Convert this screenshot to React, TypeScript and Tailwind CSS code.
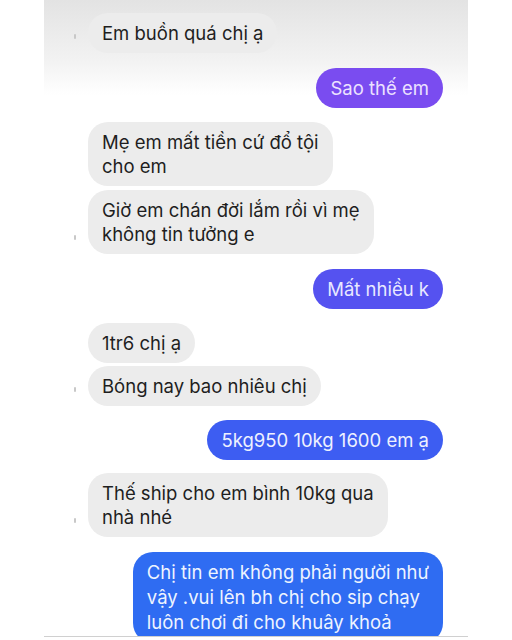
import React from "react";

const font = { fontFamily: "Inter, 'Noto Sans', sans-serif" };

function Dot() {
  return <div className="w-[2px] h-[5px] rounded-full bg-[#c8c8c8]" />;
}

function Left({
  lines,
  dot,
  className,
}: {
  lines: string[];
  dot?: boolean;
  className: string;
}) {
  return (
    <div className={"flex items-end shrink-0 " + className}>
      <div className="w-[44px] flex justify-end pr-[12px] pb-[14px]">
        {dot ? <Dot /> : null}
      </div>
      <div className="bg-[#ececec] rounded-[20px] px-[14px] py-[8px] text-[18.5px] leading-[24px] text-[#1e1e1e]">
        {lines.map((l, i) => (
          <div key={i}>{l}</div>
        ))}
      </div>
    </div>
  );
}

function Right({
  lines,
  bg,
  fg,
  className,
  lh,
}: {
  lines: string[];
  bg: string;
  fg: string;
  className: string;
  lh?: string;
}) {
  return (
    <div className={"flex justify-end shrink-0 pr-[25px] " + className}>
      <div
        className={
          "rounded-[20px] px-[14px] py-[8px] text-[18.5px] " +
          bg +
          " " +
          fg +
          " " +
          (lh ?? "leading-[24px]")
        }
      >
        {lines.map((l, i) => (
          <div key={i}>{l}</div>
        ))}
      </div>
    </div>
  );
}

export default function App() {
  return (
    <div className="w-[512px] h-[640px] bg-white flex justify-center" style={font}>
      <div className="w-[424px] h-[640px] flex flex-col">
        <div className="h-[636px] overflow-hidden flex flex-col bg-[linear-gradient(to_bottom,#e3e3e3_0px,#f2f2f2_60px,#ffffff_95px,#ffffff_100%)]">
          <Left className="mt-[13px]" lines={["Em buồn quá chị ạ"]} dot />
          <Right
            className="mt-[15px]"
            bg="bg-[#7a4cf0]"
            fg="text-[#ece2ff]"
            lines={["Sao thế em"]}
          />
          <Left className="mt-[14px]" lines={["Mẹ em mất tiền cứ đổ tội", "cho em"]} />
          <Left
            className="mt-[4px]"
            lines={["Giờ em chán đời lắm rồi vì mẹ", "không tin tưởng e"]}
            dot
          />
          <Right
            className="mt-[15px]"
            bg="bg-[#5552f0]"
            fg="text-[#e8e8ff]"
            lines={["Mất nhiều k"]}
          />
          <Left className="mt-[14px]" lines={["1tr6 chị ạ"]} />
          <Left className="mt-[3px]" lines={["Bóng nay bao nhiêu chị"]} dot />
          <Right
            className="mt-[14px]"
            bg="bg-[#3d5df2]"
            fg="text-[#eef1ff]"
            lines={["5kg950 10kg 1600 em ạ"]}
          />
          <Left
            className="mt-[13px]"
            lines={["Thế ship cho em bình 10kg qua", "nhà nhé"]}
            dot
          />
          <Right
            className="mt-[15px]"
            bg="bg-[#2f6cf2]"
            fg="text-[#eef4ff]"
            lh="leading-[25px]"
            lines={[
              "Chị tin em không phải người như",
              "vậy .vui lên bh chị cho sip chạy",
              "luôn chơi đi cho khuây khoả",
            ]}
          />
        </div>
        <div className="h-[1px] bg-[#d0d0d0] shrink-0" />
      </div>
    </div>
  );
}
